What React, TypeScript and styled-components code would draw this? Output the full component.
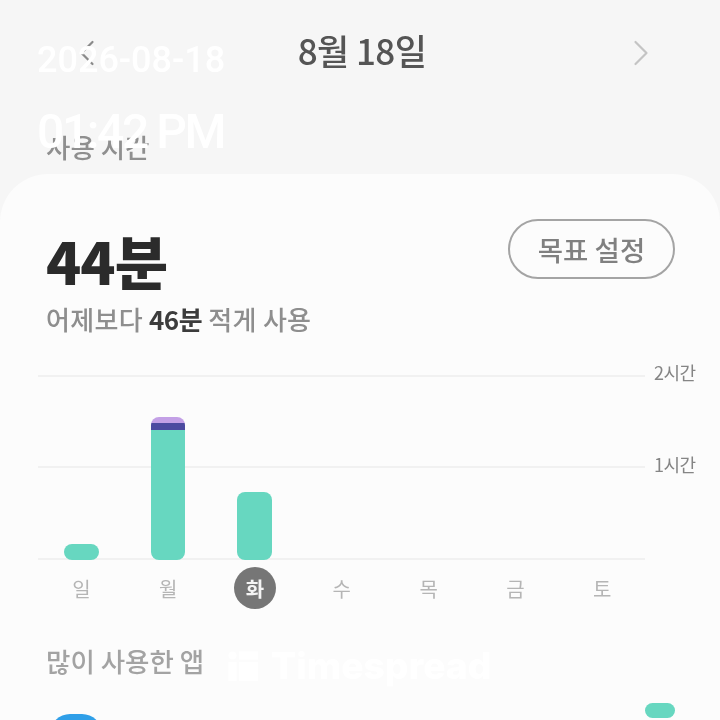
import styled, { createGlobalStyle } from 'styled-components'
import { ChevronLeft, ChevronRight } from 'lucide-react'

const KR = `'Noto Sans CJK KR', 'Noto Sans', sans-serif`

const GlobalStyle = createGlobalStyle`
	html, body {
		margin: 0;
		padding: 0;
		background: #f6f6f6;
	}
	#root {
		width: 720px;
		height: 720px;
		overflow: hidden;
	}
`

const Screen = styled.div`
	position: relative;
	width: 720px;
	height: 720px;
	overflow: hidden;
	background: #f6f6f6;
	font-family: ${KR};
	filter: blur(0.6px);
`

const TopBar = styled.div`
	display: grid;
	grid-template-columns: 1fr auto 1fr;
	align-items: center;
	height: 52px;
	padding: 24px 57px 0 65px;
`

const NavIcon = styled.span<{ $tone: string; $end?: boolean }>`
	display: flex;
	margin-top: 5px;
	justify-self: ${({ $end }) => ($end ? 'end' : 'start')};
	color: ${({ $tone }) => $tone};
`

const DateTitle = styled.div`
	margin-left: -4px;
	font-size: 35px;
	font-weight: 500;
	line-height: 52px;
	letter-spacing: -0.6px;
	color: #555;
`

const SectionLabel = styled.div`
	padding: 55px 0 0 46px;
	height: 43px;
	font-size: 26.5px;
	font-weight: 500;
	line-height: 32px;
	color: #8f8f8f;
`

const Card = styled.div`
	height: 600px;
	padding: 0 0 0 46px;
	background: #fcfcfc;
	border-radius: 48px 48px 0 0;
`

const SummaryRow = styled.div`
	display: flex;
	justify-content: space-between;
	align-items: flex-start;
	padding: 45px 45px 0 0;
`

const Total = styled.div`
	margin-top: -1px;
	font-size: 58px;
	font-weight: 900;
	line-height: 84px;
	letter-spacing: -1px;
	color: #2b2b2b;
`

const GoalButton = styled.div`
	box-sizing: border-box;
	width: 167px;
	height: 60px;
	border: 2px solid #a4a4a4;
	border-radius: 30px;
	font-size: 27.5px;
	font-weight: 500;
	line-height: 56px;
	text-align: center;
	color: #808080;
`

const Compare = styled.div`
	margin-top: -1px;
	font-size: 26px;
	font-weight: 500;
	line-height: 36px;
	letter-spacing: 0.3px;
	color: #8e8e8e;
	& strong {
		font-weight: 700;
		letter-spacing: -0.5px;
		color: #3c3c3c;
	}
`

const Chart = styled.div`
	display: grid;
	grid-template-columns: 607px 1fr;
	margin: 38px 0 0 -8px;
	height: 185px;
`

const Plot = styled.div`
	position: relative;
	height: 185px;
	display: grid;
	grid-template-rows: 91px 1fr;
	border-bottom: 2px solid #f1f1f1;
	box-sizing: border-box;
`

const GridLine = styled.div`
	border-top: 2px solid #f1f1f1;
`

const BarSlots = styled.div`
	position: absolute;
	left: 0;
	right: 0;
	bottom: -2px;
	display: grid;
	grid-template-columns: repeat(7, 86.7px);
	align-items: end;
`

const BarSlot = styled.div`
	display: flex;
	justify-content: center;
`

const Bar = styled.div`
	display: flex;
	flex-direction: column;
	width: 34.5px;
	border-radius: 8px;
	overflow: hidden;
`

const BarPart = styled.div<{ $color: string; $size: number }>`
	height: ${({ $size }) => $size}px;
	background: ${({ $color }) => $color};
`

const AxisLabels = styled.div`
	display: grid;
	grid-template-rows: 92px 92px;
	padding-left: 9px;
	margin-top: -17px;
`

const AxisLabel = styled.div`
	font-size: 18px;
	line-height: 28px;
	letter-spacing: -0.5px;
	color: #858585;
`

const Days = styled.div`
	display: grid;
	grid-template-columns: repeat(7, 86.8px);
	margin: 7px 0 0 -8px;
	height: 44px;
`

const Day = styled.div<{ $active?: boolean }>`
	justify-self: center;
	width: 42px;
	height: 42px;
	border-radius: 50%;
	display: flex;
	align-items: center;
	justify-content: center;
	font-size: 20px;
	font-weight: ${({ $active }) => ($active ? 700 : 400)};
	background: ${({ $active }) => ($active ? '#767676' : 'transparent')};
	color: ${({ $active }) => ($active ? '#f4f4f4' : '#b5b5b5')};
`

const AppsHeading = styled.div`
	margin-top: 32px;
	font-size: 26.5px;
	font-weight: 500;
	line-height: 36px;
	color: #a3a3a3;
`

const Watermark = styled.div`
	position: absolute;
	left: 228px;
	top: 648px;
	display: flex;
	align-items: center;
	gap: 13px;
	font-family: 'Inter', sans-serif;
	font-size: 37.2px;
	font-weight: 800;
	line-height: 36px;
	color: #ffffff;
`

const Stamp = styled.div`
	position: absolute;
	left: 37px;
	top: 39px;
	color: #ffffff;
	font-family: 'Roboto', sans-serif;
	font-weight: 500;
`

const StampDate = styled.div`
	font-size: 36px;
	line-height: 42px;
`

const StampTime = styled.div`
	margin-top: 23px;
	font-size: 48px;
	line-height: 56px;
	letter-spacing: -2.4px;
`

const AppIcon = styled.div`
	position: absolute;
	left: 50px;
	top: 714px;
	width: 52px;
	height: 52px;
	border-radius: 20px;
	background: #2f9fe8;
`

const AppBar = styled.div`
	position: absolute;
	left: 645px;
	top: 703px;
	width: 30px;
	height: 15px;
	border-radius: 8px;
	background: #67d7c0;
`

const TEAL = '#67d7c0'

const bars = [
	{ day: '일', parts: [{ color: TEAL, size: 16 }] },
	{
		day: '월',
		parts: [
			{ color: '#c3a0e6', size: 6 },
			{ color: '#4c4aa0', size: 7 },
			{ color: TEAL, size: 130 },
		],
	},
	{ day: '화', active: true, parts: [{ color: TEAL, size: 68 }] },
	{ day: '수', parts: [] },
	{ day: '목', parts: [] },
	{ day: '금', parts: [] },
	{ day: '토', parts: [] },
]

const App = () => (
	<Screen>
		<GlobalStyle />
		<TopBar>
			<NavIcon $tone='#8a8a8a'>
				<ChevronLeft size={44} strokeWidth={1.2} />
			</NavIcon>
			<DateTitle>8월 18일</DateTitle>
			<NavIcon $tone='#c4c4c4' $end>
				<ChevronRight size={44} strokeWidth={1.2} />
			</NavIcon>
		</TopBar>
		<SectionLabel>사용 시간</SectionLabel>
		<Card>
			<SummaryRow>
				<Total>44분</Total>
				<GoalButton>목표 설정</GoalButton>
			</SummaryRow>
			<Compare>
				어제보다 <strong>46분</strong> 적게 사용
			</Compare>
			<Chart>
				<Plot>
					<GridLine />
					<GridLine />
					<BarSlots>
						{bars.map(bar => (
							<BarSlot key={bar.day}>
								{bar.parts.length > 0 && (
									<Bar>
										{bar.parts.map(part => (
											<BarPart key={part.color} $color={part.color} $size={part.size} />
										))}
									</Bar>
								)}
							</BarSlot>
						))}
					</BarSlots>
				</Plot>
				<AxisLabels>
					<AxisLabel>2시간</AxisLabel>
					<AxisLabel>1시간</AxisLabel>
				</AxisLabels>
			</Chart>
			<Days>
				{bars.map(bar => (
					<Day key={bar.day} $active={bar.active}>
						{bar.day}
					</Day>
				))}
			</Days>
			<AppsHeading>많이 사용한 앱</AppsHeading>
		</Card>
		<AppIcon />
		<AppBar />
		<Watermark>
			<svg width='30' height='30' viewBox='0 0 30 30' fill='#fff'>
				<circle cx='4.5' cy='4.5' r='4' />
				<rect x='0.5' y='11' width='8' height='19' />
				<rect x='11' y='0.5' width='19' height='8' />
				<rect x='11' y='11' width='19' height='19' />
			</svg>
			Timespread
		</Watermark>
		<Stamp>
			<StampDate>2026-08-18</StampDate>
			<StampTime>01:42 PM</StampTime>
		</Stamp>
	</Screen>
)

export default App
